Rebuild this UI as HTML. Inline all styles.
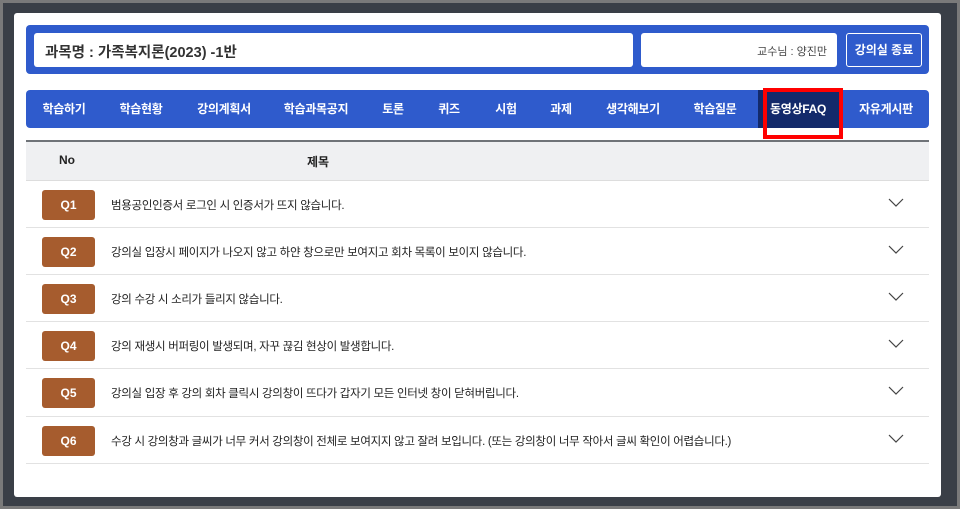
<!DOCTYPE html><html><head><meta charset="utf-8"><style>
*{margin:0;padding:0;box-sizing:border-box}
body{width:975px;height:509px;background:#fff;font-family:"Liberation Sans","Noto Sans CJK KR",sans-serif;position:relative;overflow:hidden}
.outer{position:absolute;left:0;top:0;width:960px;height:509px;background:#7a7a7a}
.frame{position:absolute;left:3px;top:3px;width:954px;height:503px;background:#3a3f47}
.panel{position:absolute;left:14px;top:13px;width:927px;height:484px;background:#fff;border-radius:3px}
.a{position:absolute}
.top{left:26px;top:25px;width:903px;height:49px;background:#2f5bcc;border-radius:4px}
.title{left:34px;top:33px;width:599px;height:34px;background:#fff;border-radius:3px;font-size:14.5px;font-weight:bold;color:#333;padding:8px 0 0 11px}
.prof{left:641px;top:33px;width:196px;height:34px;background:#fff;border-radius:3px;font-size:11px;color:#444;text-align:right;padding:10px 10px 0 0}
.btn{left:846px;top:33px;width:76px;height:34px;border:1px solid #fff;border-radius:3px;color:#fff;font-size:12px;font-weight:bold;text-align:center;line-height:32px}
.nav{left:26px;top:90px;width:903px;height:38px;background:#2f5bcc;border-radius:4px}
.act{left:758px;top:90px;width:85px;height:38px;background:#132a6b}
.ni{position:absolute;top:90px;height:38px;line-height:38px;color:#fff;font-size:12px;font-weight:bold;transform:translateX(-50%);white-space:nowrap;letter-spacing:-0.3px}
.red{left:763px;top:88px;width:80px;height:51px;border:4px solid #f00}
.hd{left:26px;top:140px;width:903px;height:41px;background:#eff0f2;border-top:2px solid #6f7378;border-bottom:1px solid #ddd;font-size:12px;font-weight:bold;color:#222}
.row{position:absolute;left:26px;width:903px;height:47px;border-bottom:1px solid #e2e2e2}
.q{position:absolute;left:16px;top:9px;width:53px;height:30px;background:#a65c2e;border-radius:3px;color:#fff;font-weight:bold;font-size:12px;text-align:center;line-height:30px}
.t{position:absolute;left:85px;top:16px;font-size:11.5px;color:#222;letter-spacing:-0.3px}
.c{position:absolute;left:862px;top:17px}
</style></head><body>
<div class="outer"></div><div class="frame"></div><div class="panel"></div>
<div class="a top"></div>
<div class="a title">과목명 : 가족복지론(2023) -1반</div>
<div class="a prof">교수님 : 양진만</div>
<div class="a btn">강의실 종료</div>
<div class="a nav"></div><div class="a act"></div>
<div class="ni" style="left:64px">학습하기</div>
<div class="ni" style="left:141px">학습현황</div>
<div class="ni" style="left:224px">강의계획서</div>
<div class="ni" style="left:316px">학습과목공지</div>
<div class="ni" style="left:393px">토론</div>
<div class="ni" style="left:449px">퀴즈</div>
<div class="ni" style="left:506px">시험</div>
<div class="ni" style="left:561px">과제</div>
<div class="ni" style="left:633px">생각해보기</div>
<div class="ni" style="left:715px">학습질문</div>
<div class="ni" style="left:798px">동영상FAQ</div>
<div class="ni" style="left:886px">자유게시판</div>
<div class="a red"></div>
<div class="a hd"><span class="a" style="left:33px;top:11px">No</span><span class="a" style="left:281px;top:11px">제목</span></div>
<div class="row" style="top:181px"><div class="q">Q1</div><div class="t">범용공인인증서 로그인 시 인증서가 뜨지 않습니다.</div><svg class="c" width="16" height="10"><path d="M1 1 L8 8 L15 1" fill="none" stroke="#444" stroke-width="1.2"/></svg></div>
<div class="row" style="top:228px"><div class="q">Q2</div><div class="t">강의실 입장시 페이지가 나오지 않고 하얀 창으로만 보여지고 회차 목록이 보이지 않습니다.</div><svg class="c" width="16" height="10"><path d="M1 1 L8 8 L15 1" fill="none" stroke="#444" stroke-width="1.2"/></svg></div>
<div class="row" style="top:275px"><div class="q">Q3</div><div class="t">강의 수강 시 소리가 들리지 않습니다.</div><svg class="c" width="16" height="10"><path d="M1 1 L8 8 L15 1" fill="none" stroke="#444" stroke-width="1.2"/></svg></div>
<div class="row" style="top:322px"><div class="q">Q4</div><div class="t">강의 재생시 버퍼링이 발생되며, 자꾸 끊김 현상이 발생합니다.</div><svg class="c" width="16" height="10"><path d="M1 1 L8 8 L15 1" fill="none" stroke="#444" stroke-width="1.2"/></svg></div>
<div class="row" style="top:369px;height:48px"><div class="q">Q5</div><div class="t">강의실 입장 후 강의 회차 클릭시 강의창이 뜨다가 갑자기 모든 인터넷 창이 닫혀버립니다.</div><svg class="c" width="16" height="10"><path d="M1 1 L8 8 L15 1" fill="none" stroke="#444" stroke-width="1.2"/></svg></div>
<div class="row" style="top:417px"><div class="q">Q6</div><div class="t">수강 시 강의창과 글씨가 너무 커서 강의창이 전체로 보여지지 않고 잘려 보입니다. (또는 강의창이 너무 작아서 글씨 확인이 어렵습니다.)</div><svg class="c" width="16" height="10"><path d="M1 1 L8 8 L15 1" fill="none" stroke="#444" stroke-width="1.2"/></svg></div>
</body></html>
